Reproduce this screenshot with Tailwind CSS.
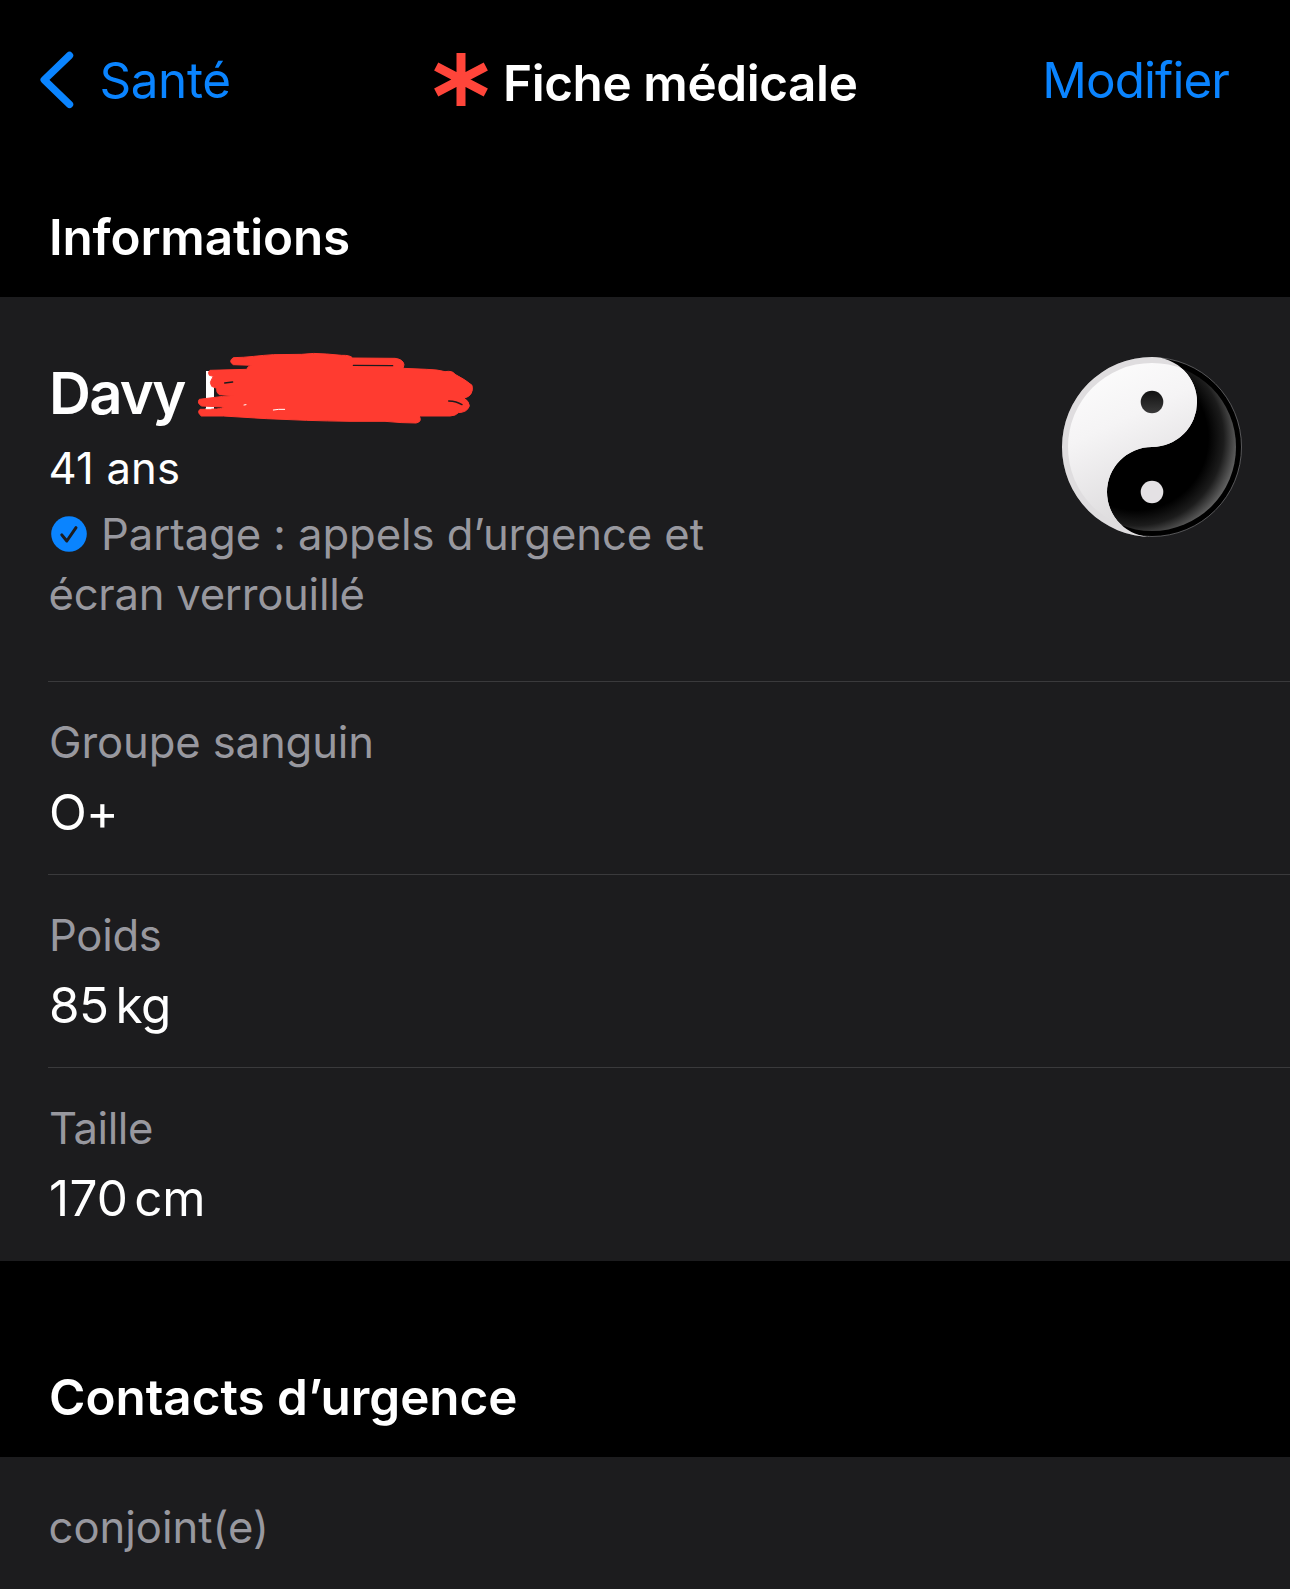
<!DOCTYPE html>
<html lang="fr">
<head>
<meta charset="utf-8">
<title>Fiche médicale</title>
<script src="https://cdn.jsdelivr.net/npm/@tailwindcss/browser@4"></script>
</head>
<body class="bg-black font-['Inter',sans-serif] text-white">
<div class="flex h-[1589px] w-[1290px] flex-col overflow-hidden bg-black">

  <header class="grid h-40 shrink-0 grid-cols-[434px_1fr_auto] items-center pr-[61px] text-[49.4px] leading-[60px] whitespace-nowrap">
    <a class="flex items-center gap-[26px] pl-[37.5px] text-[#0a84ff]">
      <svg class="h-[60px] w-9" viewBox="0 0 36 60" fill="none" stroke="currentColor" stroke-width="7.4" stroke-linecap="round" stroke-linejoin="round"><path d="M31.500 5.500 6.200 29.800l25.300 24.600"/></svg>
      <span class="tracking-[-0.4px]">Santé</span>
    </a>
    <h1 class="flex items-center gap-[14px] font-semibold">
      <svg class="h-[54px] w-[55px] shrink-0" viewBox="-27 -26.500 55 54" fill="none" stroke="#ff453a" stroke-width="9"><path d="M0-26.500V26.500M-24.800-12.900 24.800 12.900M-24.800 12.900 24.800-12.900"/></svg>
      <span class="pt-[5px] tracking-[-0.38px]">Fiche médicale</span>
    </h1>
    <a class="tracking-[-0.92px] text-[#0a84ff]">Modifier</a>
  </header>

  <h2 class="h-[137px] shrink-0 pt-[47px] pl-[49px] text-[49.4px] leading-[60px] font-semibold tracking-[-0.14px]">Informations</h2>

  <section class="h-[964px] shrink-0 bg-[#1c1c1e] pl-12">
    <div class="flex h-[385px] justify-between border-b border-[#3a3a3c] pr-12">
      <div class="pt-[61px]">
        <div class="relative flex h-[70px] items-center gap-[21px] pl-px text-[58px] leading-[70px] font-semibold">
          <span class="tracking-[-1.69px]">Davy</span>
          <span class="mb-1 h-[40px] w-2 bg-white"></span>
          <svg class="absolute top-[-18px] left-[-18px] h-40 w-[460px] max-w-none" viewBox="0 0 1380 480">
            <path fill="#ff3b30" stroke="#ff3b30" stroke-width="3" stroke-linejoin="round" d="M610 53C650 53 690 46 730 44L815 43Q850 38 890 42L935 46Q960 45 968 54L1095 55Q1120 58 1122 74L1119 85 1190 88Q1225 89 1245 95 1268 91 1275 103 1308 120 1326 136 1330 150 1323 161 1318 171 1302 174 1318 184 1318 198 1312 217 1285 218 1278 227 1260 228L1168 228Q1177 246 1158 249 1115 249 1065 244L960 244Q890 243 830 241L710 236 580 228 514 228Q500 217 510 208L560 207Q580 205 580 201L515 198Q500 190 508 178L540 174Q580 168 612 167L568 164Q558 158 560 145L545 139Q537 127 546 116L550 109 538 106Q532 96 540 91L650 88 655 80 665 76 610 74Q594 64 610 53Z"/>
            <path fill="none" stroke="#1c1c1e" stroke-width="4" stroke-linecap="round" d="M970 76 1088 77M584 129 608 126M1256 183Q1280 184 1296 194"/>
            <path fill="none" stroke="#fff" stroke-width="3" stroke-linecap="round" d="M528 206H543M730 210Q745 207 764 208M642 195 648 194"/>
          </svg>
        </div>
        <p class="mt-[11px] pl-[0.5px] text-[43.6px] leading-[60px] tracking-[0.2px]">41 ans</p>
        <div class="mt-[6px] w-[680px] text-[43.6px] leading-[60px] text-[#98989f]">
          <p class="flex items-center gap-[14.5px] pl-[2.5px]">
            <svg class="mb-0.5 size-9 shrink-0" viewBox="0 0 36 36"><circle cx="18" cy="18" r="17.800" fill="#0a84ff"/><path d="M10.800 18.900 15.800 25 25 11.700" fill="none" stroke="#1c1c1e" stroke-width="3" stroke-linecap="round" stroke-linejoin="round"/></svg>
            <span class="tracking-[-0.06px] whitespace-nowrap">Partage : appels d’urgence et</span>
          </p>
          <p class="pl-[0.5px] tracking-[-0.24px]">écran verrouillé</p>
        </div>
      </div>
      <svg class="mt-[60px] size-[180px] shrink-0" viewBox="-90 -90 180 180">
        <defs>
          <linearGradient id="pearl" x1="0" y1="0" x2=".35" y2="1"><stop offset="0" stop-color="#fff"/><stop offset=".45" stop-color="#f5f4f5"/><stop offset="1" stop-color="#dbd9db"/></linearGradient>
          <radialGradient id="sheen" gradientUnits="userSpaceOnUse" cx="-16" cy="-9" r="103"><stop offset="0.7" stop-color="#000"/><stop offset=".85" stop-color="#1c1c1c"/><stop offset="1" stop-color="#666"/></radialGradient>
          <linearGradient id="pupil" x1="0" y1="0" x2="0" y2="1"><stop offset="0" stop-color="#111"/><stop offset="1" stop-color="#3a3a3a"/></linearGradient>
          <clipPath id="disc"><circle r="84"/></clipPath>
        </defs>
        <circle r="89.500" fill="#000" stroke="#77777a" stroke-width=".7"/>
        <circle r="84" fill="url(#sheen)"/>
        <path d="M0-90A90 90 0 0 0 0 90A45 45 0 0 1 0 0A45 45 0 0 0 0-90Z" fill="#dfdddf"/>
        <path d="M0-90A90 90 0 0 0 0 90A45 45 0 0 1 0 0A45 45 0 0 0 0-90Z" fill="url(#pearl)" clip-path="url(#disc)"/>
        <circle cy="-45" r="11.300" fill="url(#pupil)"/>
        <circle cy="45" r="11.300" fill="#e4e1e4"/>
      </svg>
    </div>

    <div class="h-[193px] border-b border-[#3a3a3c] pt-[31px] pl-px">
      <p class="text-[43.6px] leading-[60px] tracking-[-0.12px] text-[#98989f]">Groupe sanguin</p>
      <p class="mt-[9px] text-[49.4px] leading-[60px] tracking-[-0.8px]">O+</p>
    </div>
    <div class="h-[193px] border-b border-[#3a3a3c] pt-[31px] pl-px">
      <p class="text-[43.6px] leading-[60px] tracking-[-0.3px] text-[#98989f]">Poids</p>
      <p class="mt-[9px] flex gap-[7px] text-[49.4px] leading-[60px] tracking-[-0.5px]"><span>85</span><span>kg</span></p>
    </div>
    <div class="h-[193px] pt-[31px] pl-px">
      <p class="text-[43.6px] leading-[60px] tracking-[-0.42px] text-[#98989f]">Taille</p>
      <p class="mt-[9px] flex gap-[6px] text-[49.4px] leading-[60px]"><span class="tracking-[0.3px]">170</span><span class="tracking-[-0.4px]">cm</span></p>
    </div>
  </section>

  <h2 class="h-[196px] shrink-0 pt-[106px] pl-[49px] text-[49.4px] leading-[60px] font-semibold">Contacts d’urgence</h2>

  <section class="flex-1 bg-[#1c1c1e] pt-[41px] pl-[48.5px]">
    <p class="text-[43.6px] leading-[60px] text-[#98989f]">conjoint(e)</p>
  </section>
</div>
</body>
</html>
